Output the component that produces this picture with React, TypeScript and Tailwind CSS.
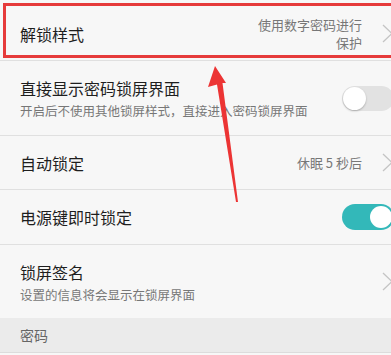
import { ReactNode } from 'react';

const font = { fontFamily: '"Noto Sans CJK SC", "Noto Sans", sans-serif' };

function Chevron() {
  return (
    <svg width="11" height="19" viewBox="0 0 11 19" className="shrink-0">
      <path d="M1 1 L10 9.5 L1 18" fill="none" stroke="#c4c4c4" strokeWidth="1.3" />
    </svg>
  );
}

function Toggle({ on }: { on: boolean }) {
  return on ? (
    <div className="w-[52px] h-[26px] rounded-full bg-[#33b8b9] flex items-center justify-end pr-[2px] shrink-0">
      <div className="w-[22px] h-[22px] rounded-full bg-white" />
    </div>
  ) : (
    <div className="w-[52px] h-[25px] rounded-full bg-[#e2e2e2] flex items-center pl-[1px] shrink-0">
      <div className="w-[23px] h-[23px] rounded-full bg-white shadow-[0_1px_2px_rgba(0,0,0,0.25)]" />
    </div>
  );
}

function Row({
  title,
  sub,
  right,
  className,
}: {
  title: string;
  sub?: string;
  right?: ReactNode;
  className: string;
}) {
  return (
    <div className={`flex items-center justify-between pl-5 border-b border-[#e0e0e0] ${className}`}>
      <div className="flex flex-col">
        <span className="text-[16px] leading-[22px] text-[#1e1e1e]">{title}</span>
        {sub && <span className="text-[12.5px] leading-[16px] text-[#777] mt-[4px]">{sub}</span>}
      </div>
      {right}
    </div>
  );
}

export default function App() {
  return (
    <div className="w-full h-[355px] overflow-hidden bg-[#f7f7f7] relative" style={font}>
      <div className="w-[400px] flex flex-col">
        <Row
          className="h-[61px] pt-[7px]"
          title="解锁样式"
          right={
            <div className="flex items-center pr-[7px]">
              <span className="w-[112px] text-right text-[13px] leading-[18px] text-[#777] mr-[20px]">
                使用数字密码进行保护
              </span>
              <Chevron />
            </div>
          }
        />
        <Row
          className="h-[75px]"
          title="直接显示密码锁屏界面"
          sub="开启后不使用其他锁屏样式，直接进入密码锁屏界面"
          right={<div className="pr-[6px]"><Toggle on={false} /></div>}
        />
        <Row
          className="h-[54px]"
          title="自动锁定"
          right={
            <div className="flex items-center pr-[7px]">
              <span className="text-[13px] text-[#777] mr-[20px]">休眠 5 秒后</span>
              <Chevron />
            </div>
          }
        />
        <Row
          className="h-[55px]"
          title="电源键即时锁定"
          right={<div className="pr-[6px]"><Toggle on={true} /></div>}
        />
        <Row
          className="h-[73px] border-b-0"
          title="锁屏签名"
          sub="设置的信息将会显示在锁屏界面"
          right={<div className="pr-[7px]"><Chevron /></div>}
        />
        <div className="h-[35px] bg-[#ebebeb] border-b border-[#dcdcdc] flex items-center pl-5">
          <span className="text-[14px] text-[#666]">密码</span>
        </div>
      </div>

      {/* red highlight box */}
      <div className="absolute left-[3px] top-[3px] w-[400px] h-[55px] border-[3px] border-[#e63b3b]" />

      {/* red arrow */}
      <svg className="absolute left-0 top-0" width="391" height="355" viewBox="0 0 391 355">
        <polygon
          points="215,66 226,83 222.5,83 238,202 236,202 217,84.5 208,87"
          fill="#ec3434"
        />
      </svg>
    </div>
  );
}
